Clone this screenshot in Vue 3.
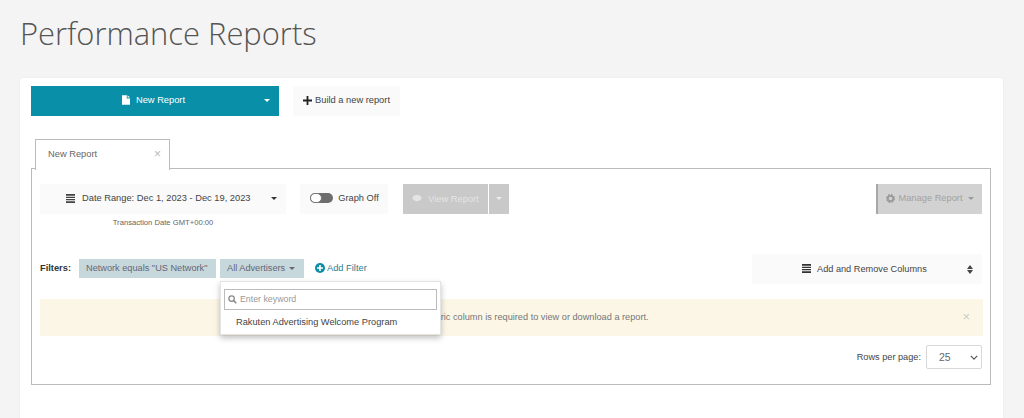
<script setup>
const title = 'Performance Reports'
</script>

<template>
  <div class="page">
    <h1 class="title">{{ title }}</h1>
    <main class="card">
      <div class="top-actions">
        <button class="new-btn">
          <span class="new-label">
            <svg class="doc" viewBox="0 0 10 12"><path d="M0 0h6v4h4v8H0zM7 0l3 3H7z" fill="#fff" /></svg>
            New Report
          </span>
          <i class="caret white"></i>
        </button>
        <button class="build-btn"><svg class="plus" viewBox="0 0 10 10"><path d="M4 0h2v4h4v2H6v4H4V6H0V4h4z" fill="#222" /></svg>Build a new report</button>
      </div>
      <div class="tabs">
        <div class="tab"><span>New Report</span><span class="tab-x">×</span></div>
      </div>
      <section class="panel">
        <div class="row-controls">
          <div class="date-col">
            <button class="date-btn">
              <svg class="lines" viewBox="0 0 10 10"><path d="M0 0h10v2H0zM0 3h10v1.500H0zM0 5.500h10V7H0zM0 8h10v2H0z" fill="#444" /></svg>
              <span class="date-text">Date Range: Dec 1, 2023 - Dec 19, 2023</span>
              <i class="caret dark"></i>
            </button>
            <div class="tz">Transaction Date GMT+00:00</div>
          </div>
          <div class="graph"><span class="switch"><span class="knob"></span></span>Graph Off</div>
          <div class="view-group">
            <button class="view-btn">
              <svg class="eye" viewBox="0 0 12 10"><path d="M6 1c3 0 5 2 6 4-1 2-3 4-6 4S1 7 0 5c1-2 3-4 6-4z" fill="#e4e4e4" /></svg>
              View Report
            </button>
            <button class="view-caret"><i class="caret light"></i></button>
          </div>
          <button class="manage-btn">
            <svg class="gear" viewBox="0 0 10 10"><circle cx="5" cy="5" r="3" fill="none" stroke="#9a9a9a" stroke-width="2" /><circle cx="5" cy="5" r="4.300" fill="none" stroke="#9a9a9a" stroke-width="1.400" stroke-dasharray="2 1.380" /></svg>
            Manage Report
            <i class="caret grey"></i>
          </button>
        </div>

        <div class="row-filters">
          <strong class="filters-label">Filters:</strong>
          <span class="chip network">Network equals "US Network"</span>
          <div class="adv-wrap">
            <span class="chip adv">All Advertisers<i class="caret chip-caret"></i></span>
            <div class="menu">
              <div class="search">
                <svg class="mag" viewBox="0 0 12 12"><circle cx="4.800" cy="4.800" r="3.600" fill="none" stroke="#888" stroke-width="1.700" /><path d="M7.500 7.500 11 11" stroke="#888" stroke-width="2" /></svg>
                <span>Enter keyword</span>
              </div>
              <div class="option">Rakuten Advertising Welcome Program</div>
            </div>
          </div>
          <a class="add-filter">
            <svg class="circle-plus" viewBox="0 0 10 10"><circle cx="5" cy="5" r="5" fill="#0d8ca6" /><path d="M4.200 2h1.600v2.200H8v1.600H5.800V8H4.200V5.800H2V4.200h2.200z" fill="#fff" /></svg>
            Add Filter
          </a>
          <button class="columns-btn">
            <span class="columns-label">
              <svg class="lines" viewBox="0 0 10 10"><path d="M0 0h10v2H0zM0 3h10v1.500H0zM0 5.500h10V7H0zM0 8h10v2H0z" fill="#333" /></svg>
              Add and Remove Columns
            </span>
            <span class="sort"><i></i><i></i></span>
          </button>
        </div>

        <div class="alert">
          <span class="alert-text">At least one metric column is required to view or download a report.</span>
          <span class="alert-x">×</span>
        </div>

        <div class="rows">
          <span>Rows per page:</span>
          <div class="select">25
            <svg class="chev" viewBox="0 0 10 6"><path d="M1 1l4 4 4-4" fill="none" stroke="#555" stroke-width="1.500" /></svg>
          </div>
        </div>
      </section>
    </main>
  </div>
</template>

<style>
html, body { margin: 0; background: #f4f4f4; overflow: hidden; }
</style>

<style scoped>
* { box-sizing: border-box; }
button { font-family: inherit; border: 0; padding: 0 0 2px; margin: 0; }
.page {
  height: 418px;
  overflow: hidden;
  padding: 0 21px 0 20px;
  background: #f4f4f4;
  font-family: "Liberation Sans", Arial, sans-serif;
  font-size: 9.300px;
  color: #444;
}
.title {
  margin: 0;
  height: 78px;
  padding-top: 11px;
  font-family: "Open Sans", sans-serif;
  font-weight: 300;
  font-size: 30.900px;
  line-height: 44px;
  color: #555;
}
.card {
  height: 340px;
  padding: 8px 11px 0;
  background: #fff;
  border-radius: 3px 3px 0 0;
  box-shadow: 0 0 2px #e4e4e4;
}
.top-actions { display: flex; gap: 14px; height: 30px; }
.new-btn {
  position: relative;
  width: 248px;
  height: 30px;
  display: flex;
  align-items: center;
  justify-content: center;
  background: #0a8fa9;
  color: #fff;
  font-size: 9.300px;
}
.new-label { display: flex; align-items: center; gap: 6px; margin-right: 3px; }
.new-btn .caret { position: absolute; right: 9px; top: 13px; }
.doc { width: 8px; height: 10px; }
.build-btn {
  width: 107px;
  height: 30px;
  display: flex;
  align-items: center;
  justify-content: center;
  gap: 3px;
  background: #fafafa;
  color: #444;
  font-size: 9.300px;
}
.plus { width: 9px; height: 9px; }
.caret {
  display: inline-block;
  width: 0;
  height: 0;
  border-left: 3px solid transparent;
  border-right: 3px solid transparent;
  border-top: 3px solid currentColor;
}
.caret.white { color: #fff; }
.caret.dark { color: #333; }
.caret.light { color: #eee; }
.caret.grey { color: #999; }
.tabs { display: flex; height: 30px; margin-top: 23px; padding-left: 4px; position: relative; z-index: 1; }
.tab {
  width: 135px;
  height: 31px;
  display: flex;
  align-items: center;
  justify-content: space-between;
  padding: 0 8px 3px 12px;
  background: #fff;
  border: 1px solid #bbb;
  border-bottom: 0;
  color: #666;
}
.tab-x { font-size: 12px; color: #bbb; }
.panel {
  width: 960px;
  height: 217px;
  margin-top: -1px;
  padding: 15px 8px 0;
  border: 1px solid #bbb;
}
.row-controls { display: flex; align-items: flex-start; height: 70px; }
.date-col { width: 246px; }
.date-btn {
  width: 246px;
  height: 30px;
  display: flex;
  align-items: center;
  padding: 0 9px 2px 26px;
  background: #fafafa;
  color: #444;
  font-size: 9.300px;
}
.date-text { margin-left: 7px; flex: 1; text-align: left; }
.lines { width: 9px; height: 9px; flex: none; }
.tz { margin-top: 4px; font-size: 7.650px; line-height: 10px; text-align: center; color: #666; }
.graph {
  width: 88px;
  height: 30px;
  margin-left: 14px;
  padding: 0 0 2px 1px;
  display: flex;
  align-items: center;
  justify-content: center;
  gap: 5px;
  background: #fafafa;
  color: #444;
}
.switch { display: block; position: relative; width: 23px; height: 10px; border-radius: 5px; background: #6e6e6e; }
.knob { position: absolute; left: 0; top: 0; width: 12px; height: 10px; border-radius: 5px; background: #fff; border: 1px solid #777; }
.view-group { display: flex; gap: 1px; margin-left: 15px; }
.view-btn {
  width: 85px;
  height: 30px;
  display: flex;
  align-items: center;
  justify-content: center;
  gap: 6px;
  background: #c9c9c9;
  color: #e4e4e4;
  font-size: 9.400px;
}
.eye { width: 10px; height: 8px; }
.view-caret { width: 20px; height: 30px; background: #c9c9c9; display: flex; align-items: center; justify-content: center; }
.manage-btn {
  margin-left: auto;
  margin-right: 0;
  width: 106px;
  height: 30px;
  display: flex;
  align-items: center;
  justify-content: center;
  gap: 3px;
  background: #d2d2d2;
  border-left: 2px solid #a8a8a8;
  color: #a2a2a2;
  font-size: 9.300px;
}
.manage-btn .caret { margin-left: 2px; }
.gear { width: 9px; height: 9px; }
.row-filters { display: flex; align-items: center; height: 30px; }
.filters-label { width: 39px; font-size: 9.300px; color: #333; padding-bottom: 2px; }
.chip {
  display: flex;
  align-items: center;
  height: 19px;
  margin-top: -2px;
  padding: 0 7px;
  background: #c7d8dc;
  color: #667;
  font-size: 9.200px;
  white-space: nowrap;
}
.network { width: 137px; }
.adv-wrap { position: relative; margin-left: 4px; }
.adv { gap: 4px; width: 84px; padding: 0 7px; }
.chip-caret { color: #667; }
.menu {
  position: absolute;
  z-index: 2;
  left: 0;
  top: 20px;
  width: 221px;
  height: 54px;
  padding: 7px 3px 0;
  background: #fff;
  border: 1px solid #e4e4e4;
  box-shadow: 0 3px 6px rgba(0, 0, 0, .25);
}
.search {
  height: 21px;
  display: flex;
  align-items: center;
  gap: 3px;
  padding-left: 3px;
  border: 1px solid #bbb;
  color: #999;
  font-size: 8.800px;
}
.mag { width: 9px; height: 9px; }
.option { padding: 6px 0 0 12px; font-size: 9.250px; line-height: 12px; color: #444; white-space: nowrap; }
.add-filter {
  display: flex;
  align-items: center;
  gap: 2px;
  margin-left: 11px;
  padding-bottom: 2px;
  color: #2a7f96;
  font-size: 9.300px;
}
.circle-plus { width: 10px; height: 10px; }
.columns-btn {
  position: relative;
  margin-left: auto;
  width: 230px;
  height: 30px;
  padding-bottom: 1px;
  display: flex;
  align-items: center;
  background: #fafafa;
  color: #444;
  font-size: 9.200px;
}
.columns-label { display: flex; align-items: center; gap: 6px; margin-left: 50px; }
.sort { position: absolute; right: 9px; top: 11px; display: flex; flex-direction: column; gap: 1px; }
.sort i { display: block; width: 0; height: 0; border-left: 3px solid transparent; border-right: 3px solid transparent; }
.sort i:first-child { border-bottom: 4px solid #444; }
.sort i:last-child { border-top: 4px solid #444; }
.alert {
  position: relative;
  width: 943px;
  height: 37px;
  margin-top: 15px;
  padding-bottom: 1px;
  display: flex;
  align-items: center;
  justify-content: center;
  background: #fbf6e6;
  color: #777;
  font-size: 9.200px;
}
.alert-x { position: absolute; right: 13px; top: 11px; font-size: 13px; line-height: 14px; color: #ccc; }
.rows {
  display: flex;
  justify-content: flex-end;
  align-items: center;
  gap: 5px;
  width: 942px;
  height: 24px;
  margin-top: 9px;
  color: #444;
  font-size: 9.200px;
}
.select {
  position: relative;
  width: 56px;
  height: 24px;
  padding: 5px 0 0 12px;
  border: 1px solid #d8d8d8;
  border-radius: 2px;
  color: #666;
  font-size: 10.500px;
}
.chev { position: absolute; right: 3px; top: 9px; width: 8px; height: 5px; }
</style>
